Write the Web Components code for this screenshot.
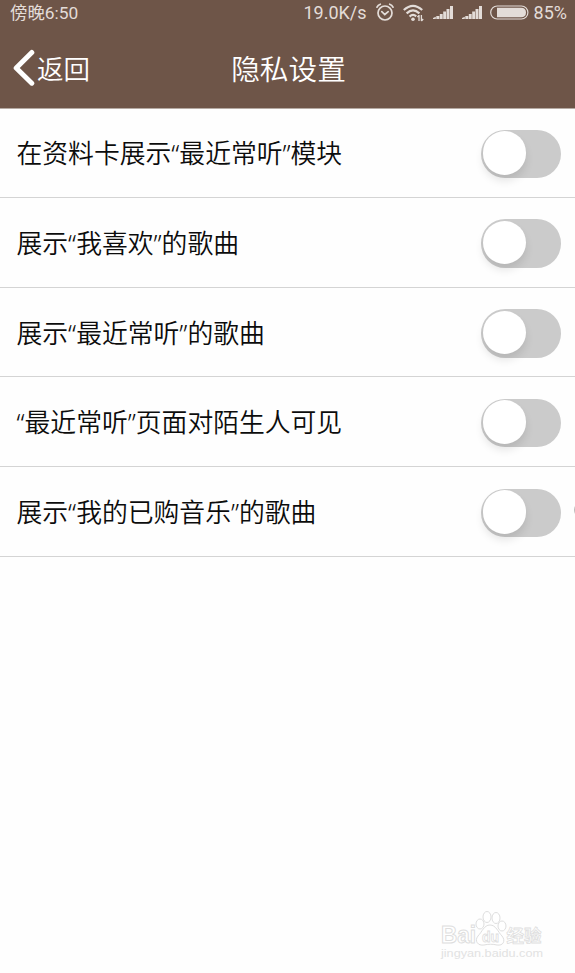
<!DOCTYPE html>
<html lang="zh-CN">
<head>
<meta charset="utf-8">
<meta name="viewport" content="width=device-width, initial-scale=1">
<title>隐私设置</title>
<style>
  body {
    margin: 0;
    background: #fefefe;
    font-family: "Noto Sans", "Noto Sans CJK SC", sans-serif;
  }
</style>
</head>
<body>
<privacy-page>
  <status-bar slot="top" time="傍晚6:50" speed="19.0K/s" battery="85%"></status-bar>
  <nav-header slot="top" back="返回">隐私设置</nav-header>
  <setting-row>在资料卡展示“最近常听”模块</setting-row>
  <setting-row>展示“我喜欢”的歌曲</setting-row>
  <setting-row>展示“最近常听”的歌曲</setting-row>
  <setting-row>“最近常听”页面对陌生人可见</setting-row>
  <setting-row>展示“我的已购音乐”的歌曲</setting-row>
  <site-mark slot="mark"></site-mark>
</privacy-page>

<script>
class StatusBar extends HTMLElement {
  connectedCallback() {
    this.attachShadow({ mode: 'open' });
    this.shadowRoot.innerHTML = `
      <style>
        :host {
          display: flex;
          align-items: center;
          height: 26px;
          padding: 0 8px 0 10px;
          color: #e3dcd8;
          font: 400 18px/26px Roboto, "Noto Sans CJK SC", sans-serif;
          white-space: nowrap;
        }
        .time { font-size: 17.4px; }
        .speed { margin-left: auto; }
        svg { display: block; flex: none; }
        .alarm { margin-left: 9px; }
        .wifi { margin-left: 9px; }
        .signal { margin-left: 9px; }
        .cell { margin: 0 5px 0 8px; }
      </style>
      <span class="time">${this.getAttribute('time')}</span>
      <span class="speed">${this.getAttribute('speed')}</span>
      <svg class="alarm" width="18" height="20" viewBox="0 0 18 20" fill="none" stroke="currentColor" stroke-width="1.7" stroke-linecap="round">
        <circle cx="9" cy="10" r="7"/>
        <path d="M5.8 8.7 8.8 11.5 12.2 8.7M1 4.2Q2 2 4.3 1.2M17 4.2Q16 2 13.7 1.2"/>
      </svg>
      <svg class="wifi" width="21" height="20" viewBox="0 0 21 20" fill="none" stroke="currentColor" stroke-width="2.2">
        <path d="M.8 7Q10 -1.4 19.2 7M3.6 10.4Q10 4.4 16.4 10.4M6.6 13.6Q10 10.4 13.2 13.4"/>
        <circle cx="10" cy="16.2" r="1.8" fill="currentColor" stroke="none"/>
        <path stroke-width="1.3" d="M16 12V18M14.4 14.2 16 12.3M18.4 12V18M18.4 18 20.2 16"/>
      </svg>
      ${this.signal()}${this.signal()}
      <svg class="cell" width="39" height="16" viewBox="0 0 39 16">
        <rect x=".7" y="1" width="37.2" height="13" rx="6.5" fill="none" stroke="currentColor" stroke-width="1.2"/>
        <path d="M7 2.8H31Q36 2.8 36 7.5T31 12.3H7Z" fill="currentColor"/>
      </svg>
      <span class="battery">${this.getAttribute('battery')}</span>
    `;
  }

  signal() {
    return `
      <svg class="signal" width="20" height="14" viewBox="0 0 20 14" fill="currentColor">
        <path d="M0 13V12L2.8 10.8V13ZM3.3 13V10H6.3V13ZM6.8 13V8H9.7V13ZM10.2 13V5.6H13V13ZM13.5 13V3H16.5V13ZM17 13V0H20V13Z"/>
      </svg>`;
  }
}

class NavHeader extends HTMLElement {
  connectedCallback() {
    this.attachShadow({ mode: 'open' });
    this.shadowRoot.innerHTML = `
      <style>
        :host {
          display: grid;
          grid-template-columns: 1fr auto 1fr;
          align-items: center;
          height: 82px;
          padding: 2px 0 0 12px;
          box-sizing: border-box;
          color: #fff;
          font-weight: 350;
        }
        .back { display: flex; align-items: center; gap: 1px; font-size: 26.5px; line-height: 40px; }
        .title { font-size: 28.7px; line-height: 40px; margin-left: -10px; }
        .back span, .title { padding-top: 1.5px; }
        svg { display: block; }
      </style>
      <div class="back">
        <svg width="24" height="38" viewBox="0 0 24 38" fill="none" stroke="#fff" stroke-width="5" stroke-linecap="round" stroke-linejoin="round">
          <path d="M19.8 3.4 4.2 19 19.8 34.2"/>
        </svg>
        <span>${this.getAttribute('back')}</span>
      </div>
      <div class="title"><slot></slot></div>
    `;
  }
}

class ToggleSwitch extends HTMLElement {
  connectedCallback() {
    this.attachShadow({ mode: 'open' });
    this.shadowRoot.innerHTML = `
      <style>
        :host {
          display: block;
          flex: none;
          box-sizing: border-box;
          width: 80px;
          height: 48.5px;
          padding: 1.5px;
          border-radius: 24.25px;
          background: #cbcbcb;
        }
        .knob {
          width: 43.5px;
          height: 43.5px;
          border-radius: 50%;
          background: #fff;
          box-shadow: 0 6px 9px rgba(0, 0, 0, 0.1);
        }
      </style>
      <div class="knob"></div>
    `;
  }
}

class SettingRow extends HTMLElement {
  connectedCallback() {
    this.attachShadow({ mode: 'open' });
    this.shadowRoot.innerHTML = `
      <style>
        :host {
          display: flex;
          align-items: center;
          justify-content: space-between;
          box-sizing: border-box;
          height: 89.75px;
          padding: 2.5px 14px 0 16.5px;
          border-bottom: 1px solid #d4d4d4;
          color: #0c0c0c;
          font-size: 25.8px;
          font-weight: 350;
          line-height: 40px;
          white-space: nowrap;
        }
        span { padding-bottom: 1.4px; }
      </style>
      <span><slot></slot></span>
      <toggle-switch></toggle-switch>
    `;
  }
}

class SiteMark extends HTMLElement {
  connectedCallback() {
    this.attachShadow({ mode: 'open' });
    this.shadowRoot.innerHTML = `
      <style>
        :host { display: block; width: 106px; height: 56px; }
        svg { display: block; }
        text { font-family: "Liberation Sans", "Noto Sans CJK SC", sans-serif; font-weight: 700; }
        .url { font-weight: 400; }
      </style>
      <svg width="106" height="56" viewBox="0 0 106 56" fill="#fff" stroke="#dedede" stroke-width="1">
        <text x="1" y="33" font-size="23" textLength="35" lengthAdjust="spacingAndGlyphs">Bai</text>
        <ellipse cx="40" cy="14" rx="4" ry="5"/>
        <ellipse cx="47" cy="7" rx="4" ry="5.5"/>
        <ellipse cx="56" cy="8" rx="4" ry="5.5"/>
        <ellipse cx="62" cy="16" rx="4" ry="5"/>
        <path d="M50 15C44 15 42 22 38 26 34 31 38 36 44 35 48 34 53 34 57 35 63 36 66 31 62 26 58 22 56 15 50 15Z"/>
        <text x="42" y="31.5" font-size="14" stroke-width=".8" textLength="17">du</text>
        <text x="66.5" y="32" font-size="17.5" stroke-width=".8" textLength="35">经验</text>
        <text class="url" x="1" y="47" font-size="11.5" fill="#e2e2e2" stroke="none" textLength="102" lengthAdjust="spacingAndGlyphs">jingyan.baidu.com</text>
      </svg>
    `;
  }
}

class PrivacyPage extends HTMLElement {
  connectedCallback() {
    this.attachShadow({ mode: 'open' });
    this.shadowRoot.innerHTML = `
      <style>
        :host { display: block; position: relative; height: 973px; overflow: hidden; }
        .top { background: #6e5548; border-bottom: 1px solid #b5aaa3; height: 108px; }
        .list { margin-top: -0.8px; }
        .mark { position: absolute; left: 440px; top: 910px; }
        /* edge of the floating assist button */
        .assist { position: absolute; left: 574px; top: 502px; width: 16px; height: 16px; border-radius: 50%; background: #bdbdbd; }
      </style>
      <div class="top"><slot name="top"></slot></div>
      <div class="list"><slot></slot></div>
      <div class="assist"></div>
      <div class="mark"><slot name="mark"></slot></div>
    `;
  }
}

customElements.define('status-bar', StatusBar);
customElements.define('nav-header', NavHeader);
customElements.define('toggle-switch', ToggleSwitch);
customElements.define('setting-row', SettingRow);
customElements.define('site-mark', SiteMark);
customElements.define('privacy-page', PrivacyPage);
</script>
</body>
</html>
